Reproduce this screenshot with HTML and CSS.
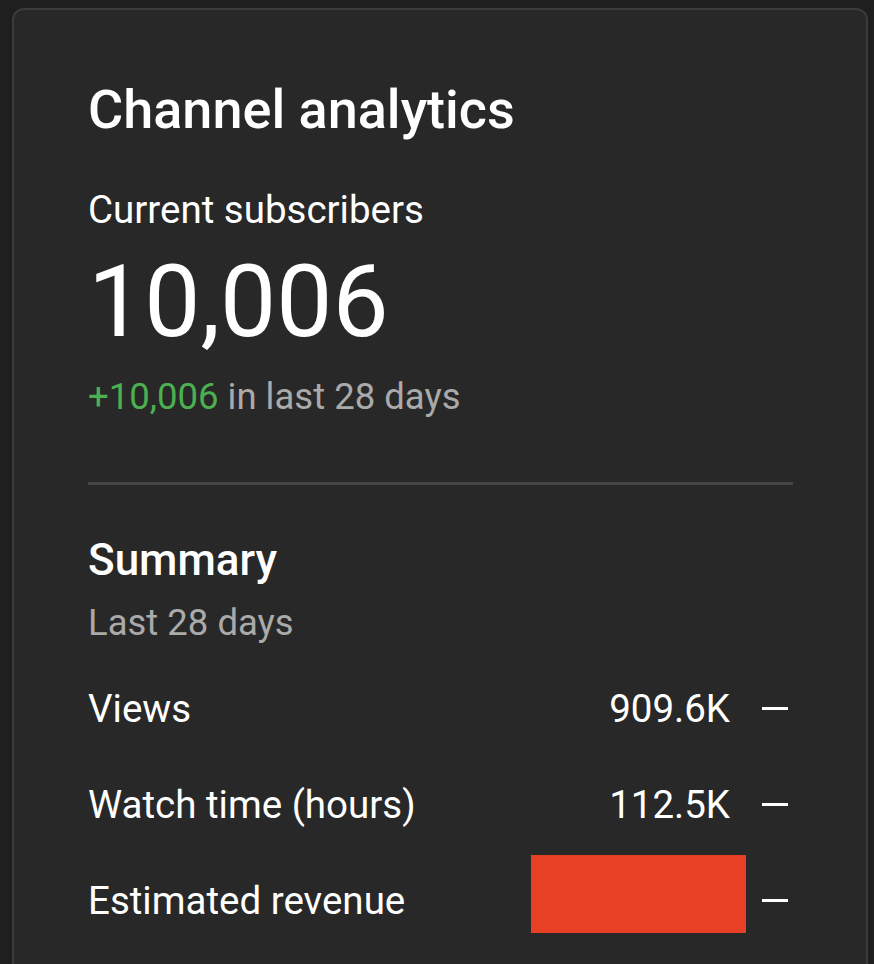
FILE: index.html
```html
<!DOCTYPE html>
<html lang="en">
<head>
<meta charset="utf-8">
<title>Channel analytics</title>
<link rel="stylesheet" href="styles.css">
</head>
<body>
<div class="card">
  <h1 class="title">Channel analytics</h1>
  <div class="label">Current subscribers</div>
  <div class="big">10,006</div>
  <div class="delta"><span class="plus">+10,006</span> in last 28 days</div>
  <div class="divider"></div>
  <h2 class="summary">Summary</h2>
  <div class="period">Last 28 days</div>
  <div class="rows">
    <div class="row"><span class="name">Views</span><span class="value">909.6K</span><span class="dash"></span></div>
    <div class="row"><span class="name">Watch time (hours)</span><span class="value">112.5K</span><span class="dash"></span></div>
    <div class="row"><span class="name">Estimated revenue</span><span class="redact"></span><span class="dash"></span></div>
  </div>
</div>
</body>
</html>
```
FILE: styles.css
```css
html, body {
  margin: 0;
  padding: 0;
  background: #1f1f1f;
  height: 100%;
  overflow: hidden;
}
body {
  font-family: Roboto, "Liberation Sans", sans-serif;
  color: #ffffff;
}
.card {
  margin: 8px 6px 0 12px;
  border: 2px solid #3b3b3b;
  border-radius: 12px;
  background: #282828;
  padding: 70px 73px 40px 74px;
  min-height: 1000px;
}
.title {
  margin: 0;
  font-size: 54px;
  line-height: 60px;
  font-weight: 500;
}
.label {
  margin-top: 48px;
  font-size: 38.5px;
  line-height: 44px;
}
.big {
  margin-top: 15px;
  font-size: 100px;
  line-height: 110px;
  font-weight: 400;
}
.delta {
  margin-top: 18.5px;
  font-size: 36.5px;
  line-height: 42px;
  color: #aaaaaa;
}
.plus {
  color: #4caf50;
}
.divider {
  margin-top: 64px;
  height: 3px;
  background: #464646;
}
.summary {
  margin: 50.5px 0 0;
  font-size: 44px;
  line-height: 50px;
  font-weight: 500;
}
.period {
  margin-top: 16.5px;
  font-size: 36.5px;
  line-height: 42px;
  color: #aaaaaa;
}
.rows {
  margin-top: 17.5px;
  padding-right: 5px;
}
.row {
  display: flex;
  align-items: center;
  height: 96px;
  font-size: 38.5px;
  line-height: 44px;
}
.name {
  flex: 1;
}
.value {
  text-align: right;
}
.dash {
  width: 26px;
  height: 3px;
  background: #ffffff;
  margin-left: 32px;
  margin-bottom: 2px;
}
.redact {
  width: 215px;
  height: 78px;
  background: #e84025;
  margin-right: -16px;
  margin-bottom: 14px;
}
```
